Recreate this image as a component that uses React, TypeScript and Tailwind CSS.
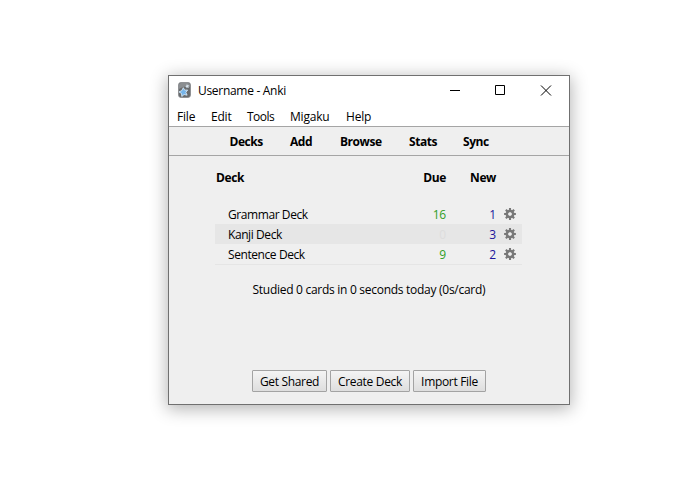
import React from "react";

function Gear() {
  return (
    <svg width="12" height="12" viewBox="0 0 12 12" className="block">
      <g fill="#787878">
        {[0, 45, 90, 135, 180, 225, 270, 315].map((a) => (
          <path key={a} d="M4.8 3 L5 0.1 H7 L7.2 3 Z" transform={`rotate(${a} 6 6)`} />
        ))}
      </g>
      <circle cx="6" cy="6" r="3.05" fill="none" stroke="#787878" strokeWidth="2.5" />
      <circle cx="6" cy="6" r="1.6" fill="#efefef" />
    </svg>
  );
}

function AnkiLogo() {
  return (
    <svg width="13" height="16" viewBox="0 0 13 16" className="block">
      <rect x="0.5" y="0.5" width="12" height="15" rx="2.4" fill="#686b6e" stroke="#85888b" strokeWidth="0.8" />
      <path d="M1 2.5Q1 1 3 1H10Q12 1 12 3V5Q7 3 1 7Z" fill="#8b8e91" />
      <path d="M8.9 2.1l.8 1.2 1.4-.1-.7 1.2.6 1.3-1.4-.3-1.1.9-.1-1.4-1.2-.7 1.3-.6z" fill="#d8e3ec" />
      <path d="M5.3 5.7l1.4 2.5 2.9-.2-1.7 2.4 1.2 2.8-3-.7-2.3 2-.3-3-2.5-1.6 2.8-1.3z" fill="#76b5ea" stroke="#e0f0fc" strokeWidth="0.8" />
    </svg>
  );
}

const decks = [
  { name: "Grammar Deck", due: "16", fresh: "1" },
  { name: "Kanji Deck", due: "0", fresh: "3" },
  { name: "Sentence Deck", due: "9", fresh: "2" },
];

export default function App() {
  return (
    <div className="h-[480px] w-[698px] overflow-hidden bg-white pt-[75px] pl-[168px] font-['Open_Sans','Noto_Sans',sans-serif] text-[12px] leading-4 whitespace-nowrap text-black">
      <div className="flex h-[330px] w-[402px] flex-col border border-[#707070] bg-[#efefef] shadow-[0_3px_16px_1px_rgba(0,0,0,0.3)]">
        <header className="h-[50px] shrink-0 bg-white">
          <div className="flex h-[28px] items-center pl-[9px]">
            <AnkiLogo />
            <span className="ml-[7px] w-[250px] pt-px tracking-[-0.3px]">Username - Anki</span>
            <svg width="102" height="11" viewBox="0 0 102 11" fill="none" stroke="#000" className="ml-[2px] block">
              <path d="M0 5.5H10M45.5 0.5H54.5V9.5H45.5ZM91 0.5L101 10.5M101 0.5L91 10.5" />
            </svg>
          </div>
          <nav className="flex h-[22px] items-center pt-[3px] pl-2">
            <span className="w-[34px] tracking-[-0.2px]">File</span>
            <span className="w-[36px] tracking-[-0.2px]">Edit</span>
            <span className="w-[43px] tracking-[-0.5px]">Tools</span>
            <span className="w-[56px] tracking-[-0.2px]">Migaku</span>
            <span className="tracking-[-0.2px]">Help</span>
          </nav>
        </header>
        <nav className="flex h-[30px] shrink-0 items-center border-y border-[#a5a5a5] pt-[2px] pl-[60.5px] font-bold tracking-[-0.45px]">
          <span className="w-[60.5px]">Decks</span>
          <span className="w-[50px]">Add</span>
          <span className="w-[69px]">Browse</span>
          <span className="w-[54px]">Stats</span>
          <span>Sync</span>
        </nav>
        <main className="flex flex-1 flex-col">
          <div className="mt-[14px] ml-[47px] flex h-4 font-bold tracking-[-0.4px]">
            <span className="w-[180px]">Deck</span>
            <span className="w-[50px] text-right">Due</span>
            <span className="w-[50px] text-right">New</span>
          </div>
          <div className="mt-[18px] ml-[46px] w-[307px]">
            {decks.map((d, i) => (
              <div key={d.name} className={"flex h-5 items-center pl-[13px] " + (i === 1 ? "bg-[#e6e6e6]" : i === 2 ? "shadow-[0_1px_0_#e5e5e5]" : "")}>
                <span className="w-[168px] pt-[2px] tracking-[-0.42px]">{d.name}</span>
                <span className={"w-[50px] pt-[2px] text-right tracking-[-0.2px] " + (d.due === "0" ? "text-[#dddddd]" : "text-[#2f9e25]")}>{d.due}</span>
                <span className="mr-2 w-[50px] pt-[2px] text-right text-[#1c159b]">{d.fresh}</span>
                <Gear />
              </div>
            ))}
          </div>
          <p className="mt-[18px] ml-[83px] pl-[0.5px] tracking-[-0.28px]">Studied 0 cards in 0 seconds today (0s/card)</p>
          <div className="mt-[72px] ml-[83px] flex gap-[3px] tracking-[-0.32px]">
            <button className="h-[22px] w-[75px] rounded-[1px] border border-[#a3a3a3] bg-linear-to-b from-[#f4f4f4] to-[#dedede] pt-[2px]">Get Shared</button>
            <button className="h-[22px] w-[80px] rounded-[1px] border border-[#a3a3a3] bg-linear-to-b from-[#f4f4f4] to-[#dedede] pt-[2px]">Create Deck</button>
            <button className="h-[22px] w-[73px] rounded-[1px] border border-[#a3a3a3] bg-linear-to-b from-[#f4f4f4] to-[#dedede] pt-[2px]">Import File</button>
          </div>
        </main>
      </div>
    </div>
  );
}
